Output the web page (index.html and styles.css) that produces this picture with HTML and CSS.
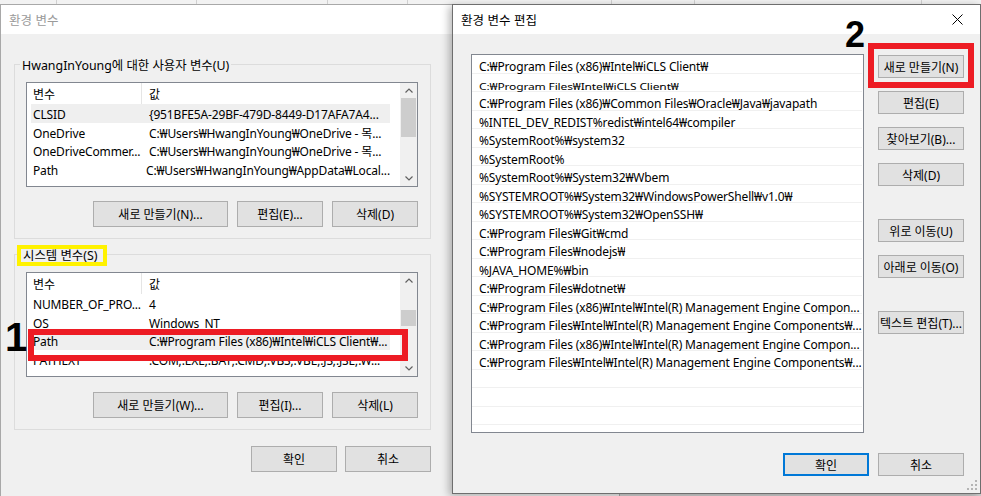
FILE: index.html
```html
<!DOCTYPE html>
<html lang="ko">
<head>
<meta charset="utf-8">
<title>환경 변수</title>
<link rel="stylesheet" href="styles.css">
</head>
<body>
<div class="desktop">

    <div class="behind">
        <span class="b1"></span><span class="b2"></span><span class="b3"></span><span class="b4"></span><span class="b5"></span><span class="b6"></span><span class="b7"></span>
    </div>

    <!-- 환경 변수 (inactive, behind) -->
    <div class="win win-main">
        <div class="titlebar inactive">환경 변수</div>
        <div class="main-body">

            <div class="group group-user">
                <div class="group-title">HwangInYoung에 대한 사용자 변수(U)</div>
                <div class="listview">
                    <div class="lv-body">
                        <div class="lv-head"><span class="c1">변수</span><span class="c2">값</span></div>
                        <div class="lv-row sel"><span class="c1">CLSID</span><span class="c2">{951BFE5A-29BF-479D-8449-D17AFA7A4...</span></div>
                        <div class="lv-row"><span class="c1">OneDrive</span><span class="c2">C:₩Users₩HwangInYoung₩OneDrive - 목...</span></div>
                        <div class="lv-row"><span class="c1">OneDriveCommer...</span><span class="c2">C:₩Users₩HwangInYoung₩OneDrive - 목...</span></div>
                        <div class="lv-row"><span class="c1">Path</span><span class="c2">C:₩Users₩HwangInYoung₩AppData₩Local...</span></div>
                    </div>
                    <div class="vscroll">
                        <div class="arrow"><svg width="8" height="5" viewBox="0 0 8 5"><polyline points="0.5,4.5 4,1 7.5,4.5" fill="none" stroke="#606060" stroke-width="1.2"/></svg></div>
                        <div class="track"><div class="thumb thumb-user"></div></div>
                        <div class="arrow"><svg width="8" height="5" viewBox="0 0 8 5"><polyline points="0.5,0.5 4,4 7.5,0.5" fill="none" stroke="#606060" stroke-width="1.2"/></svg></div>
                    </div>
                </div>
                <div class="btn-row">
                    <button class="btn btn-wide">새로 만들기(N)...</button>
                    <button class="btn">편집(E)...</button>
                    <button class="btn">삭제(D)</button>
                </div>
            </div>

            <div class="group group-sys">
                <div class="group-title marked-yellow">시스템 변수(S)</div>
                <div class="listview lv-sys">
                    <div class="lv-body">
                        <div class="lv-head"><span class="c1">변수</span><span class="c2">값</span></div>
                        <div class="lv-row"><span class="c1">NUMBER_OF_PRO...</span><span class="c2">4</span></div>
                        <div class="lv-row"><span class="c1">OS</span><span class="c2">Windows_NT</span></div>
                        <div class="lv-row sel"><span class="c1">Path</span><span class="c2">C:₩Program Files (x86)₩Intel₩iCLS Client₩...</span></div>
                        <div class="lv-row"><span class="c1">PATHEXT</span><span class="c2">.COM;.EXE;.BAT;.CMD;.VBS;.VBE;.JS;.JSE;.W...</span></div>
                    </div>
                    <div class="vscroll">
                        <div class="arrow"><svg width="8" height="5" viewBox="0 0 8 5"><polyline points="0.5,4.5 4,1 7.5,4.5" fill="none" stroke="#606060" stroke-width="1.2"/></svg></div>
                        <div class="track"><div class="thumb thumb-sys"></div></div>
                        <div class="arrow"><svg width="8" height="5" viewBox="0 0 8 5"><polyline points="0.5,0.5 4,4 7.5,0.5" fill="none" stroke="#606060" stroke-width="1.2"/></svg></div>
                    </div>
                </div>
                <div class="btn-row btn-row-sys">
                    <button class="btn btn-wide">새로 만들기(W)...</button>
                    <button class="btn">편집(I)...</button>
                    <button class="btn">삭제(L)</button>
                </div>
            </div>

            <div class="footer-main">
                <button class="btn">확인</button>
                <button class="btn">취소</button>
            </div>
        </div>
    </div>

    <!-- 환경 변수 편집 (active) -->
    <div class="win win-edit">
        <div class="titlebar">
            <span class="title-text">환경 변수 편집</span>
            <span class="close"><svg width="11" height="11" viewBox="0 0 11 11"><path d="M0.5 0.5 L10.5 10.5 M10.5 0.5 L0.5 10.5" stroke="#000" stroke-width="1"/></svg></span>
        </div>
        <div class="edit-body">
            <div class="edit-main">
                <div class="pathlist">
                    <div class="pl-row">C:₩Program Files (x86)₩Intel₩iCLS Client₩</div>
                    <div class="pl-row squash"><span>C:₩Program Files₩Intel₩iCLS Client₩</span></div>
                    <div class="pl-row">C:₩Program Files (x86)₩Common Files₩Oracle₩Java₩javapath</div>
                    <div class="pl-row">%INTEL_DEV_REDIST%redist₩intel64₩compiler</div>
                    <div class="pl-row">%SystemRoot%₩system32</div>
                    <div class="pl-row">%SystemRoot%</div>
                    <div class="pl-row">%SystemRoot%₩System32₩Wbem</div>
                    <div class="pl-row">%SYSTEMROOT%₩System32₩WindowsPowerShell₩v1.0₩</div>
                    <div class="pl-row">%SYSTEMROOT%₩System32₩OpenSSH₩</div>
                    <div class="pl-row">C:₩Program Files₩Git₩cmd</div>
                    <div class="pl-row cut"><span>C:₩Program Files₩nodejs₩</span></div>
                    <div class="pl-row">%JAVA_HOME%₩bin</div>
                    <div class="pl-row">C:₩Program Files₩dotnet₩</div>
                    <div class="pl-row">C:₩Program Files (x86)₩Intel₩Intel(R) Management Engine Compon...</div>
                    <div class="pl-row">C:₩Program Files₩Intel₩Intel(R) Management Engine Components₩...</div>
                    <div class="pl-row">C:₩Program Files (x86)₩Intel₩Intel(R) Management Engine Compon...</div>
                    <div class="pl-row cut-sm"><span>C:₩Program Files₩Intel₩Intel(R) Management Engine Components₩...</span></div>
                    <div class="pl-row"></div>
                    <div class="pl-row"></div>
                    <div class="pl-row"></div>
                </div>
                <div class="side-buttons">
                    <button class="btn btn-side">새로 만들기(N)</button>
                    <button class="btn btn-side gap-sm">편집(E)</button>
                    <button class="btn btn-side gap-sm">찾아보기(B)...</button>
                    <button class="btn btn-side gap-sm">삭제(D)</button>
                    <button class="btn btn-side gap-lg">위로 이동(U)</button>
                    <button class="btn btn-side gap-sm">아래로 이동(O)</button>
                    <button class="btn btn-side gap-lg">텍스트 편집(T)...</button>
                </div>
            </div>
            <div class="footer-edit">
                <button class="btn btn-side btn-default">확인</button>
                <button class="btn btn-side">취소</button>
            </div>
        </div>
        <svg class="grip" width="11" height="11" viewBox="0 0 11 11">
            <rect x="8" y="0" width="2" height="2" fill="#b4b4b4"/>
            <rect x="4" y="4" width="2" height="2" fill="#b4b4b4"/>
            <rect x="8" y="4" width="2" height="2" fill="#b4b4b4"/>
            <rect x="0" y="8" width="2" height="2" fill="#b4b4b4"/>
            <rect x="4" y="8" width="2" height="2" fill="#b4b4b4"/>
            <rect x="8" y="8" width="2" height="2" fill="#b4b4b4"/>
        </svg>
    </div>

    <!-- annotations drawn over the screenshot -->
    <div class="mark mark-1">1</div>
    <div class="mark mark-2">2</div>
    <div class="redbox redbox-path"></div>
    <div class="redbox redbox-new"></div>

</div>
</body>
</html>
```

FILE: styles.css
```css
* {
    box-sizing: border-box;
}

body {
    margin: 0;
    background: #d2d2d2;
    font-family: "Noto Sans", "Noto Sans CJK KR", sans-serif;
    font-size: 12px;
    color: #000;
}

.desktop {
    position: relative;
    width: 981px;
    height: 496px;
    overflow: hidden;
}

/* strip of the window lying behind both dialogs */
.behind {
    display: flex;
    height: 4px;
    background: #f2f2f2;
}

.behind span {
    height: 100%;
    border-right: 1px solid #d0d0d0;
}

.behind .b1 { width: 57px; }
.behind .b2 { width: 140px; }
.behind .b3 { width: 131px; }
.behind .b4 { width: 80px; }
.behind .b5 { width: 204px; }
.behind .b6 { width: 83px; }
.behind .b7 { width: 227px; }

.win {
    position: absolute;
    top: 4px;
    background: #f0f0f0;
}

.win-main {
    left: 0;
    width: 620px;
    height: 500px;
    border: 1px solid #a8a8a8;
}

.win-edit {
    left: 452px;
    width: 529px;
    height: 490px;
    border: 1px solid #6e6e6e;
    box-shadow: -3px 2px 8px rgba(0, 0, 0, 0.28);
    display: flex;
    flex-direction: column;
}

.titlebar {
    height: 29px;
    background: #fff;
    display: flex;
    align-items: center;
    padding-left: 8px;
    font-family: "Noto Sans CJK KR", sans-serif;
    font-size: 12.5px;
}

.titlebar.inactive {
    color: #9a9a9a;
}

.title-text {
    flex: 1;
}

.close {
    width: 46px;
    height: 29px;
    display: flex;
    align-items: center;
    justify-content: center;
}

/* ---------- left dialog ---------- */

.main-body {
    width: 431px;
    padding-left: 13px;
}

.group {
    border: 1px solid #dcdcdc;
    width: 417px;
    padding: 0 0 11px 11px;
}

.group-user {
    margin-top: 30px;
}

.group-sys {
    margin-top: 15px;
}

.group-title {
    display: table;
    line-height: 20px;
    margin: -9px 0 0 -6px;
    padding: 0 2px;
    background: #f0f0f0;
    font-size: 12.4px;
}

.group-title.marked-yellow {
    line-height: 13px;
    margin: -10px 0 0 -9px;
    border: 4px solid #fff200;
    padding: 0 6px 0 2px;
}

.listview {
    display: flex;
    width: 392px;
    height: 105px;
    margin-top: 6px;
    background: #fff;
    border: 1px solid #828790;
}

.lv-sys {
    margin-top: 6px;
}

.lv-body {
    flex: 1;
    overflow: hidden;
    padding-left: 4px;
    letter-spacing: -0.15px;
}

.lv-head,
.lv-row {
    display: flex;
    width: 359px;
    white-space: nowrap;
}

.lv-head {
    height: 21px;
    line-height: 24px;
}

.lv-head .c1 {
    border-right: 1px solid #e5e5e5;
}

.lv-row {
    height: 18.5px;
    line-height: 22px;
}

.lv-row.sel {
    background: #efefef;
}

.c1 {
    width: 111px;
    padding-left: 2px;
    overflow-x: clip;
    text-overflow: ellipsis;
}

.c2 {
    flex: 1;
    padding-left: 7px;
    overflow-x: clip;
    text-overflow: ellipsis;
}

.vscroll {
    width: 17px;
    background: #f0f0f0;
    display: flex;
    flex-direction: column;
}

.arrow {
    height: 15px;
    display: flex;
    align-items: center;
    justify-content: center;
}

.track {
    flex: 1;
    padding: 0 1px;
}

.thumb {
    background: #cdcdcd;
}

.thumb-user {
    height: 39px;
}

.thumb-sys {
    height: 16px;
    margin-top: 22px;
}

.btn-row {
    display: flex;
    justify-content: flex-end;
    gap: 9px;
    width: 392px;
    margin-top: 14px;
}

.btn-row-sys {
    margin-top: 15px;
}

.btn {
    height: 26px;
    width: 86px;
    padding: 0;
    background: #e1e1e1;
    border: 1px solid #adadad;
    font-family: "Noto Sans", "Noto Sans CJK KR", sans-serif;
    font-size: 12px;
    color: #000;
}

.btn-wide {
    width: 135px;
}

.footer-main {
    display: flex;
    justify-content: flex-end;
    gap: 8px;
    width: 417px;
    margin-top: 16px;
}

/* ---------- edit dialog ---------- */

.edit-body {
    flex: 1;
    padding: 20px 16px 0 18px;
}

.edit-main {
    display: flex;
    gap: 14px;
}

.pathlist {
    width: 393px;
    height: 379px;
    background: #fff;
    border: 1px solid #828790;
    overflow: hidden;
    padding-right: 1px;
    letter-spacing: -0.15px;
}

.pl-row {
    height: 18.5px;
    line-height: 23px;
    padding-left: 7px;
    border-bottom: 1px solid #f0f0f0;
    white-space: nowrap;
    overflow-x: clip;
    text-overflow: ellipsis;
}

.pl-row.squash span {
    display: inline-block;
    transform: scaleY(0.8);
    transform-origin: 0 75%;
}

.pl-row.cut span,
.pl-row.cut-sm span {
    display: inline-block;
    clip-path: inset(6px 0 0 0);
}

.pl-row.cut-sm span {
    clip-path: inset(4px 0 0 0);
}

.side-buttons {
    display: flex;
    flex-direction: column;
    padding-top: 1px;
}

.btn-side {
    height: 23px;
    width: 86px;
}

.gap-sm {
    margin-top: 13px;
}

.gap-lg {
    margin-top: 33px;
}

.footer-edit {
    display: flex;
    justify-content: flex-end;
    gap: 9px;
    margin-top: 20px;
}

.btn-default {
    border: 2px solid #0078d7;
}

.grip {
    position: absolute;
    right: 2px;
    bottom: 2px;
}

/* ---------- annotations ---------- */

.mark {
    position: absolute;
    font-family: "Liberation Sans", Arial, sans-serif;
    font-weight: bold;
    color: #000;
}

.mark-1 {
    left: 5px;
    top: 317px;
    font-size: 40px;
    line-height: 40px;
}

.mark-2 {
    left: 845px;
    top: 17px;
    font-size: 36px;
    line-height: 36px;
}

.redbox {
    position: absolute;
    border: 6px solid #ed1c24;
}

.redbox-path {
    left: 28px;
    top: 329px;
    width: 380px;
    height: 32px;
}

.redbox-new {
    left: 868px;
    top: 43px;
    width: 106px;
    height: 45px;
}
```
